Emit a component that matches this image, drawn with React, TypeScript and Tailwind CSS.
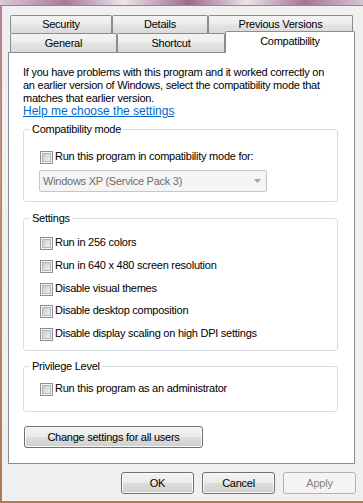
import React from 'react';

const SETTINGS = [
    'Run in 256 colors',
    'Run in 640 x 480 screen resolution',
    'Disable visual themes',
    'Disable desktop composition',
    'Disable display scaling on high DPI settings',
];

// Win7 style checkbox (unchecked)
const Checkbox = () => (
    <span className="mt-[1px] flex h-[13px] w-[13px] shrink-0 border border-[#8e8f8f] bg-[#f4f4f4] p-[1px]">
        <span className="h-full w-full border border-[#b3b7bc] bg-[linear-gradient(135deg,#c6cad0,#f2f2f2)]" />
    </span>
);

const CheckRow = ({ label }: { label: string }) => (
    <label className="flex items-start gap-[2px]">
        <Checkbox />
        <span>{label}</span>
    </label>
);

interface GroupProps {
    title: string;
    className?: string;
    children: React.ReactNode;
}

const Group: React.FC<GroupProps> = ({ title, className = '', children }) => (
    <fieldset className={`w-[315px] min-w-0 rounded-[3px] border border-[#d5dfe5] ${className}`}>
        <legend className="ml-[6px] px-[2px]">{title}</legend>
        {children}
    </fieldset>
);

const Tab = ({ label, className }: { label: string; className: string }) => (
    <div className={`flex items-center justify-center rounded-t-[2px] border border-b-0 border-[#898c95] bg-[linear-gradient(180deg,#f4f4f4_0%,#ededed_45%,#e3e3e3_55%,#dadada_100%)] ${className}`}>
        {label}
    </div>
);

const WinButton = ({ label, className, disabled = false }: { label: string; className: string; disabled?: boolean }) => (
    <button
        disabled={disabled}
        className={
            disabled
                ? `flex h-[22px] items-center justify-center rounded-[3px] border border-[#adb2b5] bg-[#f4f4f4] text-[#838383] ${className}`
                : `flex h-[22px] items-center justify-center rounded-[3px] border border-[#707070] bg-[linear-gradient(180deg,#f2f2f2_0%,#ebebeb_50%,#dddddd_50%,#cfcfcf_100%)] shadow-[inset_0_0_0_1px_#fbfbfb] ${className}`
        }
    >
        {label}
    </button>
);

export default function App() {
    return (
        <div className="h-[503px] w-[363px] overflow-hidden bg-[linear-gradient(180deg,#b7879f_0%,#c39473_35%,#a8774f_100%)] font-['Liberation_Sans',Arial,sans-serif] text-[11px] leading-[13px] tracking-[-0.25px] text-black">
            {/* blurred aero frame above the dialog */}
            <div className="h-[5px] bg-[linear-gradient(90deg,#dccbd6_0%,#a7789a_18%,#eee5ea_34%,#9b6b8e_52%,#ebe2e7_68%,#a47598_84%,#d9c5d2_100%)]" />

            <div className="ml-[1px] flex h-[497px] w-[362px] flex-col border-y border-l border-[#8c8c8c] bg-[#f0f0f0]">
                {/* Tabs */}
                <div className="ml-[8px] mt-[9px] flex h-[18px]">
                    <Tab label="Security" className="h-[18px] w-[102px]" />
                    <Tab label="Details" className="h-[18px] w-[96px]" />
                    <Tab label="Previous Versions" className="h-[18px] w-[145px]" />
                </div>
                <div className="ml-[8px] -mt-[2px] flex h-[22px] items-end">
                    <Tab label="General" className="mb-[1px] h-[19px] w-[107px]" />
                    <Tab label="Shortcut" className="mb-[1px] h-[19px] w-[108px]" />
                    <div className="relative z-10 flex h-[22px] w-[130px] justify-center rounded-t-[2px] border border-b-0 border-[#898c95] bg-white pt-[3px]">
                        Compatibility
                    </div>
                </div>

                {/* Tab page */}
                <div className="ml-[6px] -mt-[1px] h-[412px] w-[347px] border border-[#898c95] bg-white pl-[14px] pt-[13px]">
                    <p>
                        If you have problems with this program and it worked correctly on
                        <br />
                        an earlier version of Windows, select the compatibility mode that
                        <br />
                        matches that earlier version.
                    </p>
                    <div>
                        <a className="cursor-pointer text-[12px] tracking-[0px] text-[#0066cc] underline">Help me choose the settings</a>
                    </div>

                    <Group title="Compatibility mode" className="mt-[5px]">
                        <div className="pb-[9px] pl-[16px] pt-[14px]">
                            <CheckRow label="Run this program in compatibility mode for:" />
                            <div className="-ml-[1px] mt-[6px] flex h-[22px] w-[228px] items-center justify-between rounded-[2px] border border-[#c3c7ca] bg-[#f4f4f4] pl-[3px] pr-[5px] text-[#6d6d6d]">
                                <span>Windows XP (Service Pack 3)</span>
                                <svg width="7" height="4" viewBox="0 0 7 4">
                                    <path d="M0 0h7L3.5 4z" fill="#a3a3a3" />
                                </svg>
                            </div>
                        </div>
                    </Group>

                    <Group title="Settings" className="mt-[10px]">
                        <div className="flex flex-col gap-[8.75px] pb-[9px] pl-[16px] pt-[11px]">
                            {SETTINGS.map((s) => (
                                <CheckRow key={s} label={s} />
                            ))}
                        </div>
                    </Group>

                    <Group title="Privilege Level" className="mt-[9px]">
                        <div className="pb-[15px] pl-[16px] pt-[9px]">
                            <CheckRow label="Run this program as an administrator" />
                        </div>
                    </Group>

                    <WinButton label="Change settings for all users" className="ml-[1px] mt-[14px] w-[179px]" />
                </div>

                {/* Dialog buttons */}
                <div className="ml-[119px] mt-[8px] flex gap-[8px]">
                    <WinButton label="OK" className="w-[73px]" />
                    <WinButton label="Cancel" className="w-[73px]" />
                    <WinButton label="Apply" className="w-[73px]" disabled />
                </div>
            </div>
        </div>
    );
}
